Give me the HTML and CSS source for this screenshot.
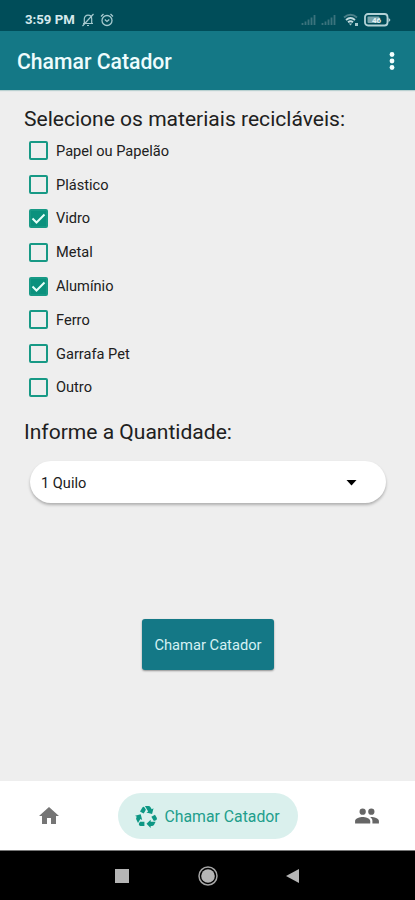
FILE: index.html
```html
<!DOCTYPE html>
<html lang="pt-BR">
<head>
<meta charset="utf-8">
<title>Chamar Catador</title>
<link rel="stylesheet" href="styles.css">
</head>
<body>
<div class="status">
  <span class="time">3:59 PM</span>
  <svg class="bell" width="14" height="14" viewBox="0 0 14 14" fill="none" stroke="#a5c9ce" stroke-width="1.2"><path d="M2 10.5h10M3.3 10.5V6C3.3 3.700 5 2.200 7 2.200S10.700 3.700 10.700 6v4.500M6 12.500h2M1.500 13L12.500 1"/></svg>
  <svg class="alarm" width="14" height="14" viewBox="0 0 14 14" fill="none" stroke="#a5c9ce" stroke-width="1.300"><circle cx="7" cy="7.500" r="5"/><path d="M1 3.500L3.500 1M13 3.500L10.500 1M4.800 6.500L7 8.500l2.300-2"/></svg>
  <span class="spacer"></span>
  <svg class="signal" width="16" height="12" viewBox="0 0 16 12" stroke="#3b737d" stroke-width="1.800"><path d="M1.500 11V9M4.500 11V7.500M7.500 11V5.500M10.500 11V3.500M13.500 11V1"/></svg>
  <svg class="signal two" width="16" height="12" viewBox="0 0 16 12" stroke="#3b737d" stroke-width="1.800"><path d="M1.500 11V9M4.500 11V7.500M7.500 11V5.500M10.500 11V3.500M13.500 11V1"/></svg>
  <svg class="wifi" width="17" height="14" viewBox="0 0 17 14" fill="none" stroke-width="1.900"><path d="M1 4.500Q7.500-.8 14 4.500" stroke="#4c8089"/><path d="M3 7Q7.500 3.200 12 7M5 9.300q2.500-2 5 0" stroke="#c2dce0"/><path d="M5.800 10.500h3.400L7.500 12.500zM12 10h3v3h-3z" fill="#a5c9ce"/></svg>
  <svg class="battery" width="27" height="14" viewBox="0 0 27 14"><rect x="1" y="1" width="22.500" height="11.500" rx="3" fill="none" stroke="#b4d3d7" stroke-width="1.800"/><path d="M24.500 4.500L26.500 7l-2 2.500z" fill="#b4d3d7"/><rect x="3.500" y="3.500" width="12" height="6.500" rx="1" fill="#7ba6ad"/><text x="12.500" y="10" text-anchor="middle" class="charge">46</text></svg>
</div>
<header class="bar">
  <h1>Chamar Catador</h1>
  <svg width="6" height="20" viewBox="0 0 6 20" fill="#f4ffff"><circle cx="3" cy="3.500" r="2.400"/><circle cx="3" cy="10" r="2.400"/><circle cx="3" cy="16.500" r="2.400"/></svg>
</header>
<main>
  <h2>Selecione os materiais recicláveis:</h2>
  <ul>
    <li><i class="box"></i><span>Papel ou Papelão</span></li>
    <li><i class="box"></i><span>Plástico</span></li>
    <li><i class="box on"><svg viewBox="0 0 19 19"><path d="M3.500 9.500l4 4 8-8"/></svg></i><span>Vidro</span></li>
    <li><i class="box"></i><span>Metal</span></li>
    <li><i class="box on"><svg viewBox="0 0 19 19"><path d="M3.500 9.500l4 4 8-8"/></svg></i><span>Alumínio</span></li>
    <li><i class="box"></i><span>Ferro</span></li>
    <li><i class="box"></i><span>Garrafa Pet</span></li>
    <li><i class="box"></i><span>Outro</span></li>
  </ul>
  <h2 class="amount">Informe a Quantidade:</h2>
  <div class="select"><span>1 Quilo</span><svg width="11" height="6" viewBox="0 0 11 6"><path d="M.5 0h10L5.500 5.500z"/></svg></div>
  <button class="call">Chamar Catador</button>
</main>
<nav class="tabs">
  <svg class="home" width="24" height="24" viewBox="0 0 24 24" fill="#757575"><path d="M10 20v-6h4v6h5v-8h3L12 3 2 12h3v8z"/></svg>
  <div class="active">
    <svg width="25" height="25" viewBox="0 0 24 24" fill="#0d9784"><path d="M5.770 7.150 7.200 4.780l1.030-1.710c.39-.65 1.330-.65 1.720 0l1.480 2.460-1.230 2.060-1 1.620-3.430-2.060zm15.950 5.820-1.600-2.660-3.460 2L18.870 16H20c.76 0 1.450-.43 1.790-1.110.14-.28.21-.58.21-.89 0-.36-.1-.71-.28-1.030zM16 21h1.500c.76 0 1.450-.43 1.790-1.110L20.740 17H16v-2l-4 4 4 4v-2zm-6-4H5.700l-.84 1.410c-.3.5-.32 1.120-.06 1.650.28.57.87.94 1.520.94H10v-4zm-3.880-2.650 1.730 1.040L6.480 9.900 1 11.270l1.700 1.020-.41.69c-.35.59-.38 1.310-.07 1.920l1.630 3.260 2.270-3.810zm10.900-9.210-1.300-2.170C15.350 2.370 14.700 2 14 2h-3.530l3.120 5.200-1.720 1.030 5.490 1.370 1.370-5.490-1.710 1.030z"/></svg>
    <span>Chamar Catador</span>
  </div>
  <svg class="people" width="26" height="26" viewBox="0 0 24 24" fill="#666"><circle cx="8" cy="8" r="2.900"/><circle cx="16" cy="8" r="2.900"/><path d="M8 13c-2.330 0-7 1.170-7 3.500V19h14v-2.500c0-2.330-4.670-3.500-7-3.500zm8 0c-.29 0-.62.02-.97.05 1.160.84 1.970 1.970 1.970 3.450V19h6v-2.500c0-2.330-4.670-3.500-7-3.500z"/></svg>
</nav>
<footer class="system">
  <svg width="14" height="14" viewBox="0 0 14 14"><path d="M0 0h14v14H0z" fill="#b5b5b5"/></svg>
  <svg width="20" height="20" viewBox="0 0 20 20"><circle cx="10" cy="10" r="9" fill="none" stroke="#a5a5a5" stroke-width="1.500"/><circle cx="10" cy="10" r="6.800" fill="#b5b5b5"/></svg>
  <svg width="13" height="14" viewBox="0 0 13 14"><path d="M13 0v14L0 7z" fill="#b5b5b5"/></svg>
</footer>
</body>
</html>
```
FILE: styles.css
```css
* { box-sizing: border-box; }
body {
  margin: 0;
  width: 415px;
  height: 900px;
  display: flex;
  flex-direction: column;
  overflow: hidden;
  background: #eee;
  color: #202020;
  font-family: Roboto, sans-serif;
}
svg { display: block; flex: none; }
span, h1, h2, button { white-space: nowrap; }
.status {
  height: 31px;
  flex: none;
  display: flex;
  align-items: center;
  padding: 8px 24px 0 25px;
  background: #004d59;
}
.time { font-size: 13.2px; font-weight: 700; color: #d5e9ec; width: 56px; }
.alarm { margin-left: 5px; }
.spacer { flex: 1; }
.two { margin-left: 4px; }
.wifi { margin-left: 6px; }
.battery { margin-left: 4px; }
.charge { font: 700 8px Roboto, sans-serif; fill: #e2f2f4; }
.bar {
  height: 59px;
  flex: none;
  display: flex;
  align-items: center;
  justify-content: space-between;
  padding: 1px 20px 0 17px;
  background: #147886;
  box-shadow: 0 1px 1px #b9d0d0;
}
h1 { margin: 0; font-size: 21.2px; font-weight: 500; color: #eefcfd; }
main { flex: 1; padding: 15px 29px 0 24px; }
h2 { margin: 0; font-size: 21.05px; line-height: 28px; font-weight: 400; }
ul { list-style: none; margin: 1px 0 0; padding: 0 0 0 5px; }
li { display: flex; align-items: center; height: 33.8px; gap: 8px; font-size: 14.6px; }
.box { width: 19px; height: 19px; border: 2px solid #179985; border-radius: 2px; flex: none; }
.on { background: #0b917d; }
.on svg { width: 19px; height: 19px; margin: -2px; fill: none; stroke: #e7fff9; stroke-width: 2; }
.amount { margin-top: 14px; }
.select {
  margin: 15px 0 0 6px;
  height: 42px;
  border-radius: 21px;
  background: #fff;
  box-shadow: 0 2px 3px #0004;
  display: flex;
  align-items: center;
  justify-content: space-between;
  padding: 2px 29px 0 11px;
  font-size: 14.6px;
}
.call {
  display: block;
  margin: 116px 0 0 118px;
  width: 132px;
  height: 51px;
  padding: 1px 0 0;
  border: 0;
  border-radius: 3px;
  background: #147886;
  box-shadow: 0 1px 2px #0006;
  color: #d5f1f4;
  font: 400 14.7px Roboto, sans-serif;
}
.tabs {
  height: 69px;
  flex: none;
  display: flex;
  align-items: center;
  justify-content: space-between;
  padding: 1px 35px 0 37px;
  background: #fff;
}
.active {
  display: flex;
  align-items: center;
  gap: 6px;
  width: 180px;
  height: 46px;
  border-radius: 23px;
  padding-left: 16px;
  background: #daf0ed;
  color: #219e8c;
  font-size: 15.8px;
}
.active span { padding-top: 1px; }
.system {
  height: 50px;
  flex: none;
  display: flex;
  align-items: center;
  justify-content: space-between;
  padding: 0 116px 0 115px;
  background: #000;
  border-top: 1px solid #777;
}
```
